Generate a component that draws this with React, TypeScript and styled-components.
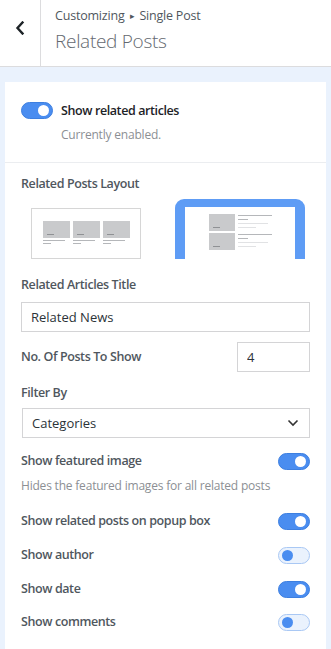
import React, { useState } from "react";
import styled, { createGlobalStyle } from "styled-components";

const GlobalStyle = createGlobalStyle`
  html, body {
    margin: 0;
    padding: 0;
    background: #eaf2fd;
  }
  body {
    font-family: "Open Sans", "Noto Sans", sans-serif;
    color: #444;
  }
  * { box-sizing: border-box; }
`;

const BLUE = "#4a8df0";

type ToggleProps = { on: boolean; onClick?: () => void };

const Toggle: React.FC<ToggleProps> = ({ on, onClick }) => (
  <ToggleTrack $on={on} onClick={onClick} role="switch" aria-checked={on}>
    <ToggleKnob $on={on} />
  </ToggleTrack>
);

const ThreeColumnThumb = () => (
  <PlainThumb>
    {[0, 1, 2].map((i) => (
      <ThumbCard key={i}>
        <ThumbImage>
          <ThumbTag />
        </ThumbImage>
        <ThumbLine $w={22} />
        <ThumbLine $w={8} />
      </ThumbCard>
    ))}
  </PlainThumb>
);

const ListThumb = () => (
  <FramedThumb>
    <FramedInner>
      {[0, 1].map((i) => (
        <ListItem key={i}>
          <ListImage>
            <ThumbTag />
          </ListImage>
          <ListText>
            <ThumbLine $w={34} />
            <ThumbLine $w={10} />
            <ThumbLine $w={30} $light />
            <ThumbLine $w={18} $light />
          </ListText>
        </ListItem>
      ))}
    </FramedInner>
  </FramedThumb>
);

const App: React.FC = () => {
  const [toggles, setToggles] = useState({
    related: true,
    featured: true,
    popup: true,
    author: false,
    date: true,
    comments: false,
  });

  const flip = (key: keyof typeof toggles) =>
    setToggles({ ...toggles, [key]: !toggles[key] });

  return (
    <>
      <GlobalStyle />
      <Header>
        <BackButton aria-label="Back">
          <svg width="10" height="14" viewBox="0 0 10 14">
            <path
              d="M7.5 1.5 L2.5 7 L7.5 12.5"
              fill="none"
              stroke="#1d2327"
              strokeWidth="2.4"
              strokeLinecap="square"
            />
          </svg>
        </BackButton>
        <HeaderTitles>
          <Breadcrumb>
            Customizing <Arrow>▸</Arrow> Single Post
          </Breadcrumb>
          <PageTitle>Related Posts</PageTitle>
        </HeaderTitles>
      </Header>

      <Panel>
        <TopSection>
          <ToggleRow>
            <Toggle on={toggles.related} onClick={() => flip("related")} />
            <StrongLabel>Show related articles</StrongLabel>
          </ToggleRow>
          <Hint $indent>Currently enabled.</Hint>
        </TopSection>

        <Section>
          <Label $top={12}>Related Posts Layout</Label>
          <LayoutRow>
            <ThreeColumnThumb />
            <ListThumb />
          </LayoutRow>

          <Label $top={17}>Related Articles Title</Label>
          <TextInput defaultValue="Related News" />

          <InlineRow>
            <Label>No. Of Posts To Show</Label>
            <NumberInput defaultValue="4" />
          </InlineRow>

          <Label $top={12}>Filter By</Label>
          <SelectBox>
            <span>Categories</span>
            <svg width="12" height="8" viewBox="0 0 12 8">
              <path
                d="M1.5 1.5 L6 6 L10.5 1.5"
                fill="none"
                stroke="#333"
                strokeWidth="1.6"
              />
            </svg>
          </SelectBox>

          <SwitchRow $top={14}>
            <Label>Show featured image</Label>
            <Toggle on={toggles.featured} onClick={() => flip("featured")} />
          </SwitchRow>
          <Hint>Hides the featured images for all related posts</Hint>

          <SwitchRow $top={17}>
            <Label>Show related posts on popup box</Label>
            <Toggle on={toggles.popup} onClick={() => flip("popup")} />
          </SwitchRow>
          <SwitchRow $top={16}>
            <Label>Show author</Label>
            <Toggle on={toggles.author} onClick={() => flip("author")} />
          </SwitchRow>
          <SwitchRow $top={16}>
            <Label>Show date</Label>
            <Toggle on={toggles.date} onClick={() => flip("date")} />
          </SwitchRow>
          <SwitchRow $top={15}>
            <Label>Show comments</Label>
            <Toggle on={toggles.comments} onClick={() => flip("comments")} />
          </SwitchRow>
        </Section>
      </Panel>
    </>
  );
};

export default App;

const Header = styled.header`
  display: flex;
  height: 67px;
  background: #fff;
  border-bottom: 1px solid #dcdcde;
`;

const BackButton = styled.button`
  width: 41px;
  border: none;
  border-right: 1px solid #dcdcde;
  background: #fff;
  display: flex;
  align-items: center;
  justify-content: center;
  padding: 0 0 10px 0;
  cursor: pointer;
`;

const HeaderTitles = styled.div`
  display: flex;
  flex-direction: column;
  padding: 5px 0 0 14px;
`;

const Breadcrumb = styled.div`
  font-size: 12.5px;
  line-height: 22px;
  color: #50575e;
  letter-spacing: -0.2px;
`;

const Arrow = styled.span`
  font-size: 9px;
  margin: 0 2px;
  vertical-align: 1px;
`;

const PageTitle = styled.div`
  font-size: 19px;
  font-weight: 300;
  line-height: 29px;
  color: #646970;
  letter-spacing: -0.3px;
`;

const Panel = styled.main`
  margin: 15px 5px 6px;
  background: #fff;
`;

const TopSection = styled.section`
  padding: 20px 16px 18px;
  border-bottom: 1px solid #ebedf0;
`;

const Section = styled.section`
  display: flex;
  flex-direction: column;
  padding: 0 16px 19px;
`;

const ToggleRow = styled.div`
  display: flex;
  align-items: center;
  gap: 8px;
  height: 17px;
`;

const SwitchRow = styled.div<{ $top: number }>`
  display: flex;
  align-items: center;
  justify-content: space-between;
  margin-top: ${({ $top }) => $top}px;
  height: 18px;
`;

const InlineRow = styled.div`
  display: flex;
  align-items: center;
  justify-content: space-between;
  margin-top: 10px;
`;

const ToggleTrack = styled.div<{ $on: boolean }>`
  position: relative;
  width: 32px;
  height: 17px;
  border-radius: 9px;
  flex-shrink: 0;
  cursor: pointer;
  background: ${({ $on }) => ($on ? BLUE : "#eaf2fd")};
  border: 1px solid ${({ $on }) => ($on ? "#3d7fe0" : "#a9c8f4")};
`;

const ToggleKnob = styled.span<{ $on: boolean }>`
  position: absolute;
  top: 2px;
  left: ${({ $on }) => ($on ? "16px" : "3px")};
  width: 11px;
  height: 11px;
  border-radius: 50%;
  background: ${({ $on }) => ($on ? "#fff" : BLUE)};
`;

const StrongLabel = styled.span`
  font-size: 12.5px;
  font-weight: 600;
  color: #1d2327;
  letter-spacing: -0.4px;
`;

const Label = styled.div<{ $top?: number }>`
  font-size: 12.5px;
  font-weight: 600;
  line-height: 18px;
  color: #50575e;
  letter-spacing: -0.4px;
  margin-top: ${({ $top }) => $top ?? 0}px;
`;

const Hint = styled.div<{ $indent?: boolean }>`
  font-size: 12px;
  line-height: 18px;
  color: #8c8f94;
  margin-top: 7px;
  letter-spacing: -0.2px;
  padding-left: ${({ $indent }) => ($indent ? "40px" : "0")};
`;

const LayoutRow = styled.div`
  display: flex;
  align-items: flex-end;
  gap: 34px;
  padding-left: 10px;
  margin-top: 6px;
  height: 60px;
`;

const PlainThumb = styled.div`
  width: 110px;
  height: 51px;
  border: 1px solid #d6d6d6;
  display: flex;
  justify-content: center;
  gap: 3px;
  padding-top: 12px;
`;

const ThumbCard = styled.div`
  display: flex;
  flex-direction: column;
  gap: 2px;
  width: 27px;
`;

const ThumbImage = styled.div`
  position: relative;
  width: 27px;
  height: 17px;
  background: #c9cacc;
`;

const ThumbTag = styled.span`
  position: absolute;
  left: 4px;
  bottom: 3px;
  width: 7px;
  height: 1.5px;
  background: #8f9194;
`;

const ThumbLine = styled.span<{ $w: number; $light?: boolean }>`
  display: block;
  width: ${({ $w }) => $w}px;
  height: 1px;
  background: ${({ $light }) => ($light ? "#e1e2e4" : "#b5b7ba")};
`;

const FramedThumb = styled.div`
  width: 130px;
  height: 60px;
  background: #5e9cf5;
  border-radius: 9px 9px 0 0;
  padding: 8px 10px 0;
  display: flex;
`;

const FramedInner = styled.div`
  flex: 1;
  background: #fff;
  display: flex;
  flex-direction: column;
  gap: 2px;
  padding: 7px 0 0 24px;
`;

const ListItem = styled.div`
  display: flex;
  gap: 3px;
`;

const ListImage = styled(ThumbImage)`
  width: 26px;
`;

const ListText = styled.div`
  display: flex;
  flex-direction: column;
  gap: 3px;
  padding-top: 1px;
`;

const TextInput = styled.input`
  margin-top: 8px;
  height: 30px;
  width: 100%;
  border: 1px solid #d4d4d6;
  border-radius: 0;
  padding: 0 9px;
  font-family: inherit;
  font-size: 13px;
  color: #2c3338;
  outline: none;
`;

const NumberInput = styled(TextInput)`
  margin-top: 0;
  width: 73px;
`;

const SelectBox = styled.div`
  margin-top: 6px;
  margin-left: 1px;
  height: 30px;
  border: 1px solid #d4d4d6;
  display: flex;
  align-items: center;
  justify-content: space-between;
  padding: 0 10px 0 9px;
  font-size: 13px;
  color: #2c3338;
`;
